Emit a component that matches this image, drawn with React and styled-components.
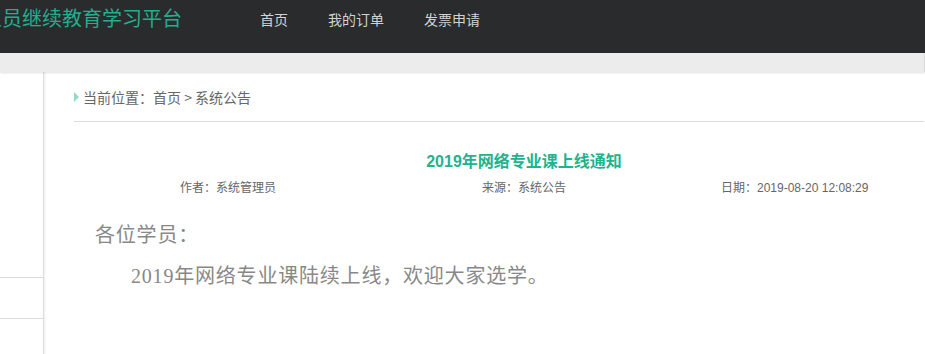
import React from 'react';
import styled, { createGlobalStyle } from 'styled-components';

const GlobalStyle = createGlobalStyle`
  html, body {
    margin: 0;
    padding: 0;
    background: #fff;
    overflow: hidden;
  }
  body {
    font-family: 'Noto Sans CJK SC', 'Liberation Sans', sans-serif;
  }
`;

// Header
// ==========================================================================

const Header = styled.header`
  height: 53px;
  background: #2a2b2d;
  display: flex;
  align-items: flex-start;
  overflow: hidden;
  white-space: nowrap;
`;

const Logo = styled.div`
  flex: none;
  margin-left: -98px;
  font-size: 20px;
  line-height: 36px;
  color: #23ae8d;
`;

const Nav = styled.nav`
  display: flex;
  margin-left: 58px;
`;

const NavItem = styled.a`
  padding: 0 20px;
  font-size: 14px;
  line-height: 38px;
  color: #d2d2d2;
  text-decoration: none;
`;

const Strip = styled.div`
  height: 19px;
  background: #ececec;
  border-right: 1px solid #dcdcdc;
  box-shadow: 0 1px 2px rgba(0, 0, 0, 0.12);
  position: relative;
`;

// Body
// ==========================================================================

const Page = styled.div`
  display: flex;
  min-height: 282px;
`;

const Sidebar = styled.aside`
  flex: none;
  width: 43px;
  border-right: 1px solid #dedede;
  box-shadow: 1px 0 2px rgba(0, 0, 0, 0.08);
  padding-top: 205px;
`;

const SideItem = styled.div`
  height: 40px;
  border-top: 1px solid #dcdcdc;
`;

const Main = styled.main`
  flex: none;
  width: 850px;
  padding-left: 30px;
`;

const Crumb = styled.div`
  height: 49px;
  display: flex;
  align-items: center;
  border-bottom: 1px solid #dcdcdc;
  font-size: 14px;
  color: #666;
`;

const Arrow = styled.span`
  width: 0;
  height: 0;
  margin-right: 4px;
  border-top: 5px solid transparent;
  border-bottom: 5px solid transparent;
  border-left: 5px solid #8fdcc9;
`;

const Article = styled.article`
  width: 900px;
`;

const Title = styled.h1`
  margin: 28px 0 0;
  text-align: center;
  font-family: 'Liberation Sans', 'Noto Sans CJK SC', sans-serif;
  font-size: 16px;
  font-weight: bold;
  line-height: 24px;
  color: #22b28f;
`;

const Meta = styled.div`
  display: grid;
  grid-template-columns: 302px 239px auto;
  padding-left: 106px;
  margin-top: 5px;
  font-family: 'Liberation Sans', 'Noto Sans CJK SC', sans-serif;
  font-size: 12px;
  line-height: 18px;
  color: #666;
`;

const Content = styled.div`
  margin-top: 18px;
  padding-left: 21px;
  font-family: 'Liberation Serif', 'Noto Sans CJK SC', serif;
  font-size: 20px;
  line-height: 41px;
  letter-spacing: 0.8px;
  color: #888;
`;

const Para = styled.p`
  margin: 0;
  text-indent: ${p => (p.indent ? '36px' : '0')};
`;

const navItems = ['首页', '我的订单', '发票申请'];

export default function App() {
  return (
    <>
      <GlobalStyle />
      <Header>
        <Logo>专业技术人员继续教育学习平台</Logo>
        <Nav>
          {navItems.map(item => (
            <NavItem key={item}>{item}</NavItem>
          ))}
        </Nav>
      </Header>
      <Strip />
      <Page>
        <Sidebar>
          <SideItem />
          <SideItem />
        </Sidebar>
        <Main>
          <Crumb>
            <Arrow />
            当前位置：首页 &gt; 系统公告
          </Crumb>
          <Article>
            <Title>2019年网络专业课上线通知</Title>
            <Meta>
              <span>作者：系统管理员</span>
              <span>来源：系统公告</span>
              <span>日期：2019-08-20 12:08:29</span>
            </Meta>
            <Content>
              <Para>各位学员：</Para>
              <Para indent>2019年网络专业课陆续上线，欢迎大家选学。</Para>
            </Content>
          </Article>
        </Main>
      </Page>
    </>
  );
}
